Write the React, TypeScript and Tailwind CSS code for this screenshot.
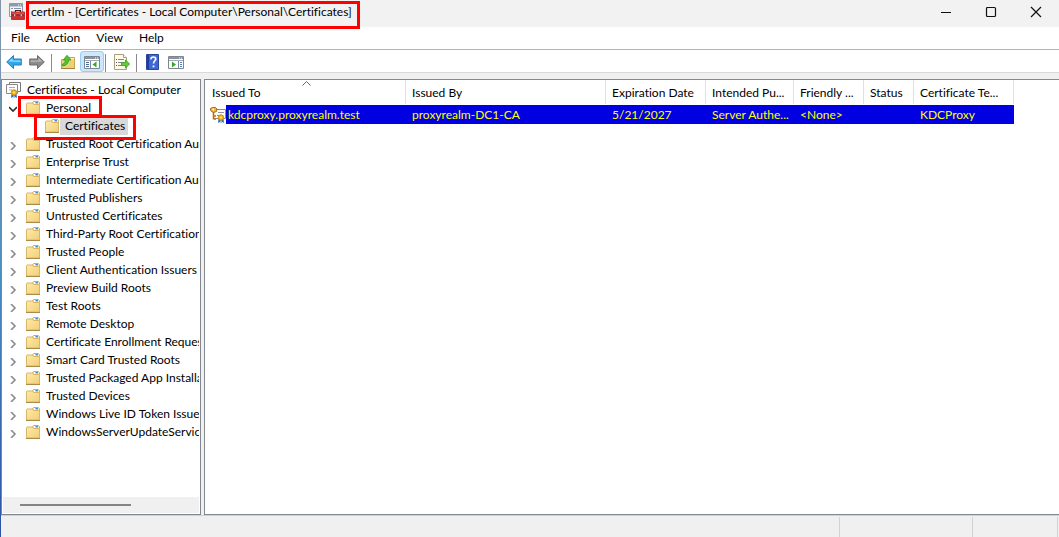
import type { ReactNode } from 'react';

const stores = [
  'Trusted Root Certification Authorities',
  'Enterprise Trust',
  'Intermediate Certification Authorities',
  'Trusted Publishers',
  'Untrusted Certificates',
  'Third-Party Root Certification Authorities',
  'Trusted People',
  'Client Authentication Issuers',
  'Preview Build Roots',
  'Test Roots',
  'Remote Desktop',
  'Certificate Enrollment Requests',
  'Smart Card Trusted Roots',
  'Trusted Packaged App Installation Authorities',
  'Trusted Devices',
  'Windows Live ID Token Issuer',
  'WindowsServerUpdateServices',
];

const columns = [
  { label: 'Issued To', width: 'w-[200px]' },
  { label: 'Issued By', width: 'w-[200px]' },
  { label: 'Expiration Date', width: 'w-[100px]' },
  { label: 'Intended Purposes', short: 'Intended Pu...', width: 'w-[88px]' },
  { label: 'Friendly Name', short: 'Friendly ...', width: 'w-[70px]' },
  { label: 'Status', width: 'w-[50px]' },
  { label: 'Certificate Template', short: 'Certificate Te...', width: 'w-[100px]' },
];

const cells = ['proxyrealm-DC1-CA', '5/21/2027', 'Server Authe...', '<None>', '', 'KDCProxy'];

function Folder() {
  return (
    <svg className="h-[14px] w-[14px] shrink-0" viewBox="0 0 14 14" aria-hidden="true">
      <defs>
        <linearGradient id="folder" x1="0" y1="0" x2="1" y2="1">
          <stop offset="0" stopColor="#ffeaa6" />
          <stop offset="1" stopColor="#f1cf78" />
        </linearGradient>
      </defs>
      <path d="M6.500 3V1.500l1-1h5l1 1V4h-7z" fill="#f3dc9c" stroke="#cfae62" />
      <path d="M8 1h4.500v2H8z" fill="#fff" />
      <path d="M9.500 1h2.500v1.500H9.500z" fill="#3b8de0" />
      <path d="M.500 2.500l.5-.5h5.500l1.200 1.500h5.800v9.500H.500z" fill="url(#folder)" stroke="#d9b665" />
      <path d="M0 13.500h14" stroke="#a98c4c" />
    </svg>
  );
}

function CertIcon({ withKey = false }: { withKey?: boolean }) {
  return (
    <svg className="h-4 w-4 shrink-0" viewBox="0 0 16 16" aria-hidden="true">
      {withKey ? (
        <>
          <path d="M3.500 2.500h12v9h-12z" fill="#fffdf3" stroke="#8b8b8b" />
          <path d="M8 5.500h6M7 8.500h2" stroke="#8a96a8" />
          <path d="M3.500 5.500v7M4 9h2M4 12h2" stroke="#b9720e" strokeWidth="1.600" />
          <path d="M.500 1.500l2-1 3 0 1.500 1.500-.500 2.500-3 1-2-1-1-1.500z" fill="#f2b03c" stroke="#8f510c" strokeWidth=".8" />
          <circle cx="3.200" cy="2.500" r=".9" fill="#fff" />
        </>
      ) : (
        <>
          <path d="M3.500 .500h11v9h-11z" fill="#fff" stroke="#777" />
          <path d="M.500 2.500h11v9H.500z" fill="#fff" stroke="#888" />
          <path d="M3 5.500h6M3 8h3" stroke="#a4afbd" />
        </>
      )}
      <path d="M8.500 11.500L8 16l1.500-1 1 1v-2.500h1V16l1-1 1.500 1-.5-4.500z" fill="#2273cf" transform={withKey ? undefined : 'translate(-3 0)'} />
      <g transform={withKey ? undefined : 'translate(-3 0)'}>
        <circle cx="11" cy="10.500" r="2.700" fill="#f4b51d" stroke="#c98d12" />
        <circle cx="11" cy="10.500" r=".9" fill="#ffe681" />
      </g>
    </svg>
  );
}

function AppIcon() {
  return (
    <svg className="h-[17px] w-4 shrink-0" viewBox="0 0 16 17" aria-hidden="true">
      <path d="M.5.500h13v13H.500z" fill="#f3f5f7" stroke="#8d98a4" />
      <path d="M1 1h12v2.500H1z" fill="#8d9aaa" />
      <path d="M9 2h1M11 2h1" stroke="#fff" />
      <path d="M2 5.500h2M5 5.500h7M2 8.500h1M2 11.500h1" stroke="#7e95ad" />
      <path d="M6.500 9V7.500h5V9" fill="none" stroke="#50191a" strokeWidth="1.200" />
      <path d="M2.500 9h13v7.500h-13z" fill="#cf2f2f" stroke="#a51f1f" strokeWidth=".8" />
      <path d="M3 9.500h12v2H3z" fill="#e0524b" />
      <path d="M3 12h12" stroke="#8c1818" />
      <path d="M5 11h1.500v2.500H5zM11.500 11H13v2.500h-1.500z" fill="#f0e6e6" stroke="#692222" strokeWidth=".4" />
    </svg>
  );
}

function Arrow({ back = false }: { back?: boolean }) {
  return (
    <svg className="h-4 w-4" viewBox="0 0 16 16" aria-hidden="true">
      {back ? (
        <>
          <path d="M.7 8L7.500 1.500v3.500h7.800v6H7.500v3.500z" fill="#30a8e8" stroke="#2a7fc0" />
          <path d="M2.500 7.500L6.500 4v2.500h8v1.500z" fill="#8bdcff" />
        </>
      ) : (
        <>
          <path d="M15.300 8L8.500 1.500v3.500H.700v6h7.800v3.500z" fill="#8b8b8b" stroke="#6c6c6c" />
          <path d="M13.500 7.500L9.500 4v2.500h-8v1.500z" fill="#b9b9b9" />
        </>
      )}
    </svg>
  );
}

function UpFolder() {
  return (
    <svg className="h-4 w-4" viewBox="0 0 16 16" aria-hidden="true">
      <path d="M1.500 14.500V5.500h6l1-2h6v11z" fill="#f0cf79" stroke="#cda651" />
      <path d="M9 4h5v1.500H9z" fill="#fff0b8" />
      <path d="M1 14.500h14" stroke="#a5823c" />
      <path d="M2 10.500c2.500-.8 3.300-2.500 3.300-4.500H3.200L7 1.300 11 6H8.500c0 3.300-2 5.400-6 6z" fill="#50c62e" stroke="#2c9a1d" strokeWidth=".8" />
    </svg>
  );
}

function PaneIcon({ right = false }: { right?: boolean }) {
  return (
    <svg className="h-4 w-4" viewBox="0 0 16 16" aria-hidden="true">
      <path d="M.500 2.500h15v12H.500z" fill="#fff" stroke="#7e8791" />
      <path d="M1 3h14v2H1z" fill="#8a949f" />
      <path d="M11 4h1M13 4h1" stroke="#fff" />
      <path d="M1 6.500h14" stroke="#a2abb4" />
      {right ? (
        <>
          <path d="M10.500 7v7.500" stroke="#7e8791" />
          <path d="M12 8.500h2M12 10.500h2M12 12.500h2" stroke="#4a84c4" />
          <path d="M4 7.500v6L8 10.500z" fill="#35a727" />
        </>
      ) : (
        <>
          <path d="M6.500 7v7.500" stroke="#7e8791" />
          <path d="M2 8.500h3M2 10.500h3M2 12.500h3" stroke="#4a6a98" />
          <path d="M12.500 7.500v6L8.500 10.500z" fill="#35a727" />
        </>
      )}
    </svg>
  );
}

function ExportIcon() {
  return (
    <svg className="h-4 w-4" viewBox="0 0 16 16" aria-hidden="true">
      <path d="M.500.500h9l3 3v12H.500z" fill="#fffbe5" stroke="#a99f80" />
      <path d="M9.500.500v3h3" fill="#fff" stroke="#a99f80" />
      <path d="M2 5.500h1M2 8.500h1M2 11.500h1" stroke="#555" />
      <path d="M4 5.500h6M4 8.500h4M4 11.500h4" stroke="#8583a3" />
      <path d="M7.500 8.500h4V6l4.200 4-4.200 4v-2.500h-4z" fill="#5dce37" stroke="#33a020" strokeWidth=".8" />
    </svg>
  );
}

function HelpIcon() {
  return (
    <svg className="h-4 w-4" viewBox="0 0 16 16" aria-hidden="true">
      <path d="M1.500.500h12v15h-12z" fill="#3f68d4" stroke="#2b469f" />
      <path d="M2 1h2v14H2z" fill="#1d3c9f" />
      <path d="M6 5.200c0-3 4.800-2.800 4.800-.3 0 1.800-2.300 2-2.300 4.600" fill="none" stroke="#fff" strokeWidth="1.700" />
      <path d="M7.600 11.500h1.800v1.800H7.600z" fill="#fff" />
    </svg>
  );
}

function ToolButton({ label, active, children }: { label: string; active?: boolean; children: ReactNode }) {
  return (
    <button
      aria-label={label}
      className={
        active
          ? 'flex h-[21px] w-6 items-center justify-center rounded-[3px] border border-[#99cdf3] bg-[#cce8ff]'
          : 'flex h-[21px] w-[23px] items-center justify-center'
      }
    >
      {children}
    </button>
  );
}

function Separator() {
  return <span className="h-[18px] w-px bg-[#8a8a8a]" />;
}

function Chevron({ open = false }: { open?: boolean }) {
  return (
    <svg className="h-2 w-2" viewBox="0 0 8 8" fill="none" aria-hidden="true">
      {open ? (
        <path d="M0 2l4 4 4-4" stroke="#303030" strokeWidth="1.600" />
      ) : (
        <path d="M2 0l4 4-4 4" stroke="#8b8b8b" strokeWidth="1.600" />
      )}
    </svg>
  );
}

export default function App() {
  return (
    <div className="flex h-screen overflow-hidden bg-[#f0f0f0] font-[Lato,'Open_Sans',sans-serif] text-[12px] leading-[18px] text-black [font-variant-ligatures:none]">
      <div className="w-px shrink-0 bg-linear-to-b from-[#8795a8] via-[#4a8fc0] to-[#2f50a8]" />
      <div className="flex min-w-0 flex-1 flex-col">
        <header className="flex h-[27px] shrink-0 items-start bg-[#f2f2f2]">
          <div className="flex flex-1 items-start gap-[6px] pt-[3px] pl-2">
            <AppIcon />
            <h1 className="relative whitespace-nowrap">
              certlm - [Certificates - Local Computer\Personal\Certificates]
              <span className="absolute -top-[2px] -left-[5px] z-10 h-7 w-[334px] border-[3px] border-[#fe0000]" />
            </h1>
          </div>
          <div className="flex pr-px">
            <button aria-label="Minimize" className="flex h-[23px] w-[45px] items-center justify-center">
              <svg className="h-3 w-3" viewBox="0 0 12 12"><path d="M1 6.500h10" stroke="#111" /></svg>
            </button>
            <button aria-label="Maximize" className="flex h-[23px] w-[45px] items-center justify-center">
              <svg className="h-3 w-3" viewBox="0 0 12 12"><rect x="1.500" y="1.500" width="9" height="9" rx="1" fill="none" stroke="#111" strokeWidth="1.200" /></svg>
            </button>
            <button aria-label="Close" className="flex h-[23px] w-[45px] items-center justify-center">
              <svg className="h-3 w-3" viewBox="0 0 12 12"><path d="M1 1l10 10M11 1L1 11" stroke="#111" strokeWidth="1.200" /></svg>
            </button>
          </div>
        </header>

        <nav className="flex h-[23px] shrink-0 items-center gap-4 border-b border-[#b3b3bb] bg-white pl-[10px]">
          <button>File</button>
          <button>Action</button>
          <button>View</button>
          <button>Help</button>
        </nav>

        <div className="flex h-[23px] shrink-0 items-end border-b border-[#d9d9d9] bg-white pl-[1px]">
          <ToolButton label="Back"><Arrow back /></ToolButton>
          <ToolButton label="Forward"><Arrow /></ToolButton>
          <span className="w-[3px]" />
          <Separator />
          <span className="w-1" />
          <ToolButton label="Up one level"><UpFolder /></ToolButton>
          <span className="w-px" />
          <ToolButton label="Show or hide console tree" active><PaneIcon /></ToolButton>
          <span className="w-px" />
          <Separator />
          <span className="w-1" />
          <ToolButton label="Export list"><ExportIcon /></ToolButton>
          <span className="w-[3px]" />
          <Separator />
          <span className="w-1" />
          <ToolButton label="Help"><HelpIcon /></ToolButton>
          <ToolButton label="Show or hide action pane"><PaneIcon right /></ToolButton>
        </div>

        <main className="flex min-h-0 flex-1 gap-[3px] pt-[6px]">
          <aside className="flex w-[200px] shrink-0 flex-col overflow-hidden border border-[#828790] bg-white p-px">
            <ul className="min-h-0 flex-1 overflow-hidden whitespace-nowrap">
              <li>
                <div className="flex h-[18px] items-center gap-[5px] pl-[3px]">
                  <CertIcon />
                  <span>Certificates - Local Computer</span>
                </div>
                <ul>
                  <li>
                    <div className="relative flex h-[18px] items-center pl-[6px]">
                      <button aria-label="Collapse Personal" className="mr-[9px] pt-px"><Chevron open /></button>
                      <Folder />
                      <span className="pl-[6px]">Personal</span>
                      <span className="absolute -top-[3px] left-[15px] z-10 h-[21px] w-[84px] border-[3px] border-[#fe0000]" />
                    </div>
                    <ul>
                      <li className="relative flex h-[18px] items-center pl-[42px]">
                        <Folder />
                        <span className="ml-px bg-[#d9d9d9] pr-[3px] pl-[5px]">Certificates</span>
                        <span className="absolute -top-[2px] left-[31px] z-10 h-[25px] w-[102px] border-[3px] border-[#fe0000]" />
                      </li>
                    </ul>
                  </li>
                  {stores.map((name) => (
                    <li key={name} className="flex h-[18px] items-center pl-[6px]">
                      <button aria-label={`Expand ${name}`} className="mr-[9px] pt-[3px]"><Chevron /></button>
                      <Folder />
                      <span className="pl-[6px]">{name}</span>
                    </li>
                  ))}
                </ul>
              </li>
            </ul>
            <div className="flex h-4 shrink-0 items-center bg-[#f0f0f0] px-[17px]">
              <div className="h-[2px] w-[111px] bg-[#858585]" />
            </div>
          </aside>

          <section className="min-w-0 flex-1 overflow-hidden border border-r-0 border-[#828790] bg-white pl-px">
            <table className="w-[808px] table-fixed border-collapse text-left whitespace-nowrap">
              <thead>
                <tr className="h-[25px]">
                  {columns.map((c, i) => (
                    <th key={c.label} title={c.label} className={`${c.width} relative p-0 pl-[6px] font-normal`}>
                      {c.short ?? c.label}
                      {i === 0 && (
                        <svg className="absolute top-[1px] left-24 h-[5px] w-[9px]" viewBox="0 0 9 5" fill="none" aria-hidden="true">
                          <path d="M.500 4.500l4-4 4 4" stroke="#666" />
                        </svg>
                      )}
                      <span className="absolute top-0 right-0 h-6 w-px bg-[#e0e0e0]" />
                    </th>
                  ))}
                </tr>
              </thead>
              <tbody>
                <tr className="h-[19px] leading-[19px] text-[#ffff00]">
                  <td className="p-0">
                    <div className="flex h-[19px] items-center">
                      <span className="flex w-5 shrink-0 pl-1"><CertIcon withKey /></span>
                      <span className="flex-1 bg-[#0000e0] pl-[2px]">kdcproxy.proxyrealm.test</span>
                    </div>
                  </td>
                  {cells.map((text, i) => (
                    <td key={i} className="bg-[#0000e0] p-0 pl-[6px]">{text}</td>
                  ))}
                </tr>
              </tbody>
            </table>
          </section>
        </main>

        <footer className="flex h-[22px] shrink-0 justify-end border-t border-[#d0d0d6] pt-px">
          <div className="w-[133px] border-l border-[#d2d2d2]" />
          <div className="w-[86px] border-x border-[#d2d2d2]" />
          <div className="w-px" />
        </footer>
      </div>
    </div>
  );
}
